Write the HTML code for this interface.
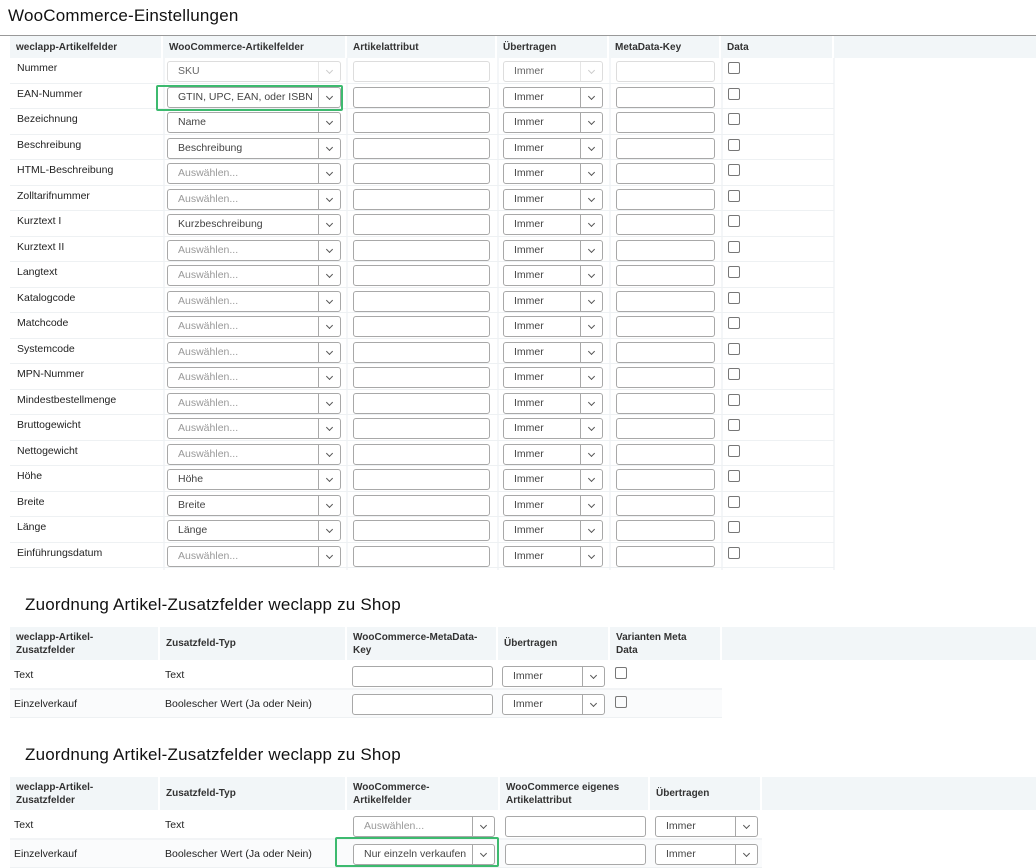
<!DOCTYPE html>
<html><head><meta charset="utf-8"><style>
*{box-sizing:border-box;margin:0;padding:0}
body{width:1036px;height:865px;overflow:hidden;background:#fff;font-family:"Liberation Sans",sans-serif;font-size:10.5px;color:#222;position:relative}
.a{position:absolute}
h1{position:absolute;font-weight:normal;font-size:17px;color:#111;letter-spacing:.2px}
.hd{position:absolute;background:#f2f6f8;font-weight:bold;font-size:10px;color:#333}
.hd div{position:absolute;top:0;bottom:0;border-right:2px solid #fff;padding:0 6px;display:flex;align-items:center;line-height:13px}
.r{position:absolute;left:10px;height:25.5px;border-bottom:1px solid #eef1f3}
.r .l{position:absolute;left:7px;top:4px}
.s{position:absolute;height:21px;border:1px solid #a8a8a8;border-radius:3px;background:#fff;color:#444;padding-left:10px;line-height:19px}
.s.p{color:#999}
.s.d{border-color:#ddd;color:#666}
.s:after{content:"";position:absolute;right:0;top:0;bottom:0;width:21px;border-left:1px solid #a8a8a8}
.s.d:after{border-color:#e6e6e6}
.s i{position:absolute;right:8px;top:6px;width:5px;height:5px;border-right:1px solid #555;border-bottom:1px solid #555;transform:rotate(45deg)}
.s.d i{border-color:#ccc}
.in{position:absolute;height:21px;border:1px solid #a8a8a8;border-radius:3px;background:#fff}
.in.d{border-color:#ddd}
.cb{position:absolute;width:12px;height:12px;border:1px solid #777;border-radius:2px}
.g{position:absolute;border:2px solid #3dba6f;border-radius:2px}
.vl{position:absolute;width:2px;background:#f4f6f8}
</style></head><body>
<h1 style="left:8px;top:6px">WooCommerce-Einstellungen</h1>
<div class="a" style="left:0;top:35px;width:1036px;height:1px;background:#999"></div>
<div class="hd" style="left:10px;top:36px;width:1026px;height:22px">
<div style="left:0;width:153px">weclapp-Artikelfelder</div>
<div style="left:153px;width:184px">WooCommerce-Artikelfelder</div>
<div style="left:337px;width:150px;align-items:flex-end;padding-bottom:4px">Artikelattribut</div>
<div style="left:487px;width:112px">Übertragen</div>
<div style="left:599px;width:112px;align-items:flex-end;padding-bottom:4px">MetaData-Key</div>
<div style="left:711px;width:113px;align-items:flex-end;padding-bottom:4px">Data</div>
</div>
<div class="vl" style="left:163px;top:58px;height:512px"></div>
<div class="vl" style="left:346px;top:58px;height:512px"></div>
<div class="vl" style="left:497px;top:58px;height:512px"></div>
<div class="vl" style="left:609px;top:58px;height:512px"></div>
<div class="vl" style="left:721px;top:58px;height:512px"></div>
<div class="vl" style="left:833px;top:58px;height:512px"></div>

<div class="r" style="top:58px;width:824px"><span class="l">Nummer</span><div class="s d" style="left:157px;top:3px;width:174px">SKU<i></i></div><div class="in d" style="left:343px;top:3px;width:137px"></div><div class="s d" style="left:493px;top:3px;width:100px">Immer<i></i></div><div class="in d" style="left:606px;top:3px;width:99px"></div><div class="cb" style="left:718px;top:4px"></div></div>
<div class="r" style="top:83.5px;width:824px"><span class="l">EAN-Nummer</span><div class="s" style="left:157px;top:3px;width:174px">GTIN, UPC, EAN, oder ISBN<i></i></div><div class="in" style="left:343px;top:3px;width:137px"></div><div class="s" style="left:493px;top:3px;width:100px">Immer<i></i></div><div class="in" style="left:606px;top:3px;width:99px"></div><div class="cb" style="left:718px;top:4px"></div></div>
<div class="r" style="top:109px;width:824px"><span class="l">Bezeichnung</span><div class="s" style="left:157px;top:3px;width:174px">Name<i></i></div><div class="in" style="left:343px;top:3px;width:137px"></div><div class="s" style="left:493px;top:3px;width:100px">Immer<i></i></div><div class="in" style="left:606px;top:3px;width:99px"></div><div class="cb" style="left:718px;top:4px"></div></div>
<div class="r" style="top:134.5px;width:824px"><span class="l">Beschreibung</span><div class="s" style="left:157px;top:3px;width:174px">Beschreibung<i></i></div><div class="in" style="left:343px;top:3px;width:137px"></div><div class="s" style="left:493px;top:3px;width:100px">Immer<i></i></div><div class="in" style="left:606px;top:3px;width:99px"></div><div class="cb" style="left:718px;top:4px"></div></div>
<div class="r" style="top:160px;width:824px"><span class="l">HTML-Beschreibung</span><div class="s p" style="left:157px;top:3px;width:174px">Auswählen...<i></i></div><div class="in" style="left:343px;top:3px;width:137px"></div><div class="s" style="left:493px;top:3px;width:100px">Immer<i></i></div><div class="in" style="left:606px;top:3px;width:99px"></div><div class="cb" style="left:718px;top:4px"></div></div>
<div class="r" style="top:185.5px;width:824px"><span class="l">Zolltarifnummer</span><div class="s p" style="left:157px;top:3px;width:174px">Auswählen...<i></i></div><div class="in" style="left:343px;top:3px;width:137px"></div><div class="s" style="left:493px;top:3px;width:100px">Immer<i></i></div><div class="in" style="left:606px;top:3px;width:99px"></div><div class="cb" style="left:718px;top:4px"></div></div>
<div class="r" style="top:211px;width:824px"><span class="l">Kurztext I</span><div class="s" style="left:157px;top:3px;width:174px">Kurzbeschreibung<i></i></div><div class="in" style="left:343px;top:3px;width:137px"></div><div class="s" style="left:493px;top:3px;width:100px">Immer<i></i></div><div class="in" style="left:606px;top:3px;width:99px"></div><div class="cb" style="left:718px;top:4px"></div></div>
<div class="r" style="top:236.5px;width:824px"><span class="l">Kurztext II</span><div class="s p" style="left:157px;top:3px;width:174px">Auswählen...<i></i></div><div class="in" style="left:343px;top:3px;width:137px"></div><div class="s" style="left:493px;top:3px;width:100px">Immer<i></i></div><div class="in" style="left:606px;top:3px;width:99px"></div><div class="cb" style="left:718px;top:4px"></div></div>
<div class="r" style="top:262px;width:824px"><span class="l">Langtext</span><div class="s p" style="left:157px;top:3px;width:174px">Auswählen...<i></i></div><div class="in" style="left:343px;top:3px;width:137px"></div><div class="s" style="left:493px;top:3px;width:100px">Immer<i></i></div><div class="in" style="left:606px;top:3px;width:99px"></div><div class="cb" style="left:718px;top:4px"></div></div>
<div class="r" style="top:287.5px;width:824px"><span class="l">Katalogcode</span><div class="s p" style="left:157px;top:3px;width:174px">Auswählen...<i></i></div><div class="in" style="left:343px;top:3px;width:137px"></div><div class="s" style="left:493px;top:3px;width:100px">Immer<i></i></div><div class="in" style="left:606px;top:3px;width:99px"></div><div class="cb" style="left:718px;top:4px"></div></div>
<div class="r" style="top:313px;width:824px"><span class="l">Matchcode</span><div class="s p" style="left:157px;top:3px;width:174px">Auswählen...<i></i></div><div class="in" style="left:343px;top:3px;width:137px"></div><div class="s" style="left:493px;top:3px;width:100px">Immer<i></i></div><div class="in" style="left:606px;top:3px;width:99px"></div><div class="cb" style="left:718px;top:4px"></div></div>
<div class="r" style="top:338.5px;width:824px"><span class="l">Systemcode</span><div class="s p" style="left:157px;top:3px;width:174px">Auswählen...<i></i></div><div class="in" style="left:343px;top:3px;width:137px"></div><div class="s" style="left:493px;top:3px;width:100px">Immer<i></i></div><div class="in" style="left:606px;top:3px;width:99px"></div><div class="cb" style="left:718px;top:4px"></div></div>
<div class="r" style="top:364px;width:824px"><span class="l">MPN-Nummer</span><div class="s p" style="left:157px;top:3px;width:174px">Auswählen...<i></i></div><div class="in" style="left:343px;top:3px;width:137px"></div><div class="s" style="left:493px;top:3px;width:100px">Immer<i></i></div><div class="in" style="left:606px;top:3px;width:99px"></div><div class="cb" style="left:718px;top:4px"></div></div>
<div class="r" style="top:389.5px;width:824px"><span class="l">Mindestbestellmenge</span><div class="s p" style="left:157px;top:3px;width:174px">Auswählen...<i></i></div><div class="in" style="left:343px;top:3px;width:137px"></div><div class="s" style="left:493px;top:3px;width:100px">Immer<i></i></div><div class="in" style="left:606px;top:3px;width:99px"></div><div class="cb" style="left:718px;top:4px"></div></div>
<div class="r" style="top:415px;width:824px"><span class="l">Bruttogewicht</span><div class="s p" style="left:157px;top:3px;width:174px">Auswählen...<i></i></div><div class="in" style="left:343px;top:3px;width:137px"></div><div class="s" style="left:493px;top:3px;width:100px">Immer<i></i></div><div class="in" style="left:606px;top:3px;width:99px"></div><div class="cb" style="left:718px;top:4px"></div></div>
<div class="r" style="top:440.5px;width:824px"><span class="l">Nettogewicht</span><div class="s p" style="left:157px;top:3px;width:174px">Auswählen...<i></i></div><div class="in" style="left:343px;top:3px;width:137px"></div><div class="s" style="left:493px;top:3px;width:100px">Immer<i></i></div><div class="in" style="left:606px;top:3px;width:99px"></div><div class="cb" style="left:718px;top:4px"></div></div>
<div class="r" style="top:466px;width:824px"><span class="l">Höhe</span><div class="s" style="left:157px;top:3px;width:174px">Höhe<i></i></div><div class="in" style="left:343px;top:3px;width:137px"></div><div class="s" style="left:493px;top:3px;width:100px">Immer<i></i></div><div class="in" style="left:606px;top:3px;width:99px"></div><div class="cb" style="left:718px;top:4px"></div></div>
<div class="r" style="top:491.5px;width:824px"><span class="l">Breite</span><div class="s" style="left:157px;top:3px;width:174px">Breite<i></i></div><div class="in" style="left:343px;top:3px;width:137px"></div><div class="s" style="left:493px;top:3px;width:100px">Immer<i></i></div><div class="in" style="left:606px;top:3px;width:99px"></div><div class="cb" style="left:718px;top:4px"></div></div>
<div class="r" style="top:517px;width:824px"><span class="l">Länge</span><div class="s" style="left:157px;top:3px;width:174px">Länge<i></i></div><div class="in" style="left:343px;top:3px;width:137px"></div><div class="s" style="left:493px;top:3px;width:100px">Immer<i></i></div><div class="in" style="left:606px;top:3px;width:99px"></div><div class="cb" style="left:718px;top:4px"></div></div>
<div class="r" style="top:542.5px;width:824px"><span class="l">Einführungsdatum</span><div class="s p" style="left:157px;top:3px;width:174px">Auswählen...<i></i></div><div class="in" style="left:343px;top:3px;width:137px"></div><div class="s" style="left:493px;top:3px;width:100px">Immer<i></i></div><div class="in" style="left:606px;top:3px;width:99px"></div><div class="cb" style="left:718px;top:4px"></div></div>
<div class="g" style="left:156px;top:85px;width:187px;height:26px"></div>

<h1 style="left:25px;top:595px">Zuordnung Artikel-Zusatzfelder weclapp zu Shop</h1>
<div class="hd" style="left:10px;top:627px;width:1026px;height:33px">
<div style="left:0;width:150px">weclapp-Artikel-<br>Zusatzfelder</div>
<div style="left:150px;width:187px">Zusatzfeld-Typ</div>
<div style="left:337px;width:151px">WooCommerce-MetaData-<br>Key</div>
<div style="left:488px;width:112px">Übertragen</div>
<div style="left:600px;width:112px">Varianten Meta<br>Data</div>
</div>
<div class="r" style="top:660px;width:712px;height:30px;border-bottom:2px solid #f2f4f6"><span class="a" style="left:4px;top:9px">Text</span><span class="a" style="left:155px;top:9px">Text</span><div class="in" style="left:342px;top:6px;width:141px;height:21px"></div><div class="s" style="left:492px;top:6px;width:103px">Immer<i></i></div><div class="cb" style="left:605px;top:7px"></div></div>
<div class="r" style="top:690px;width:712px;height:28px;background:#fafbfc"><span class="a" style="left:4px;top:8px">Einzelverkauf</span><span class="a" style="left:155px;top:8px">Boolescher Wert (Ja oder Nein)</span><div class="in" style="left:342px;top:4px;width:141px;height:21px"></div><div class="s" style="left:492px;top:4px;width:103px">Immer<i></i></div><div class="cb" style="left:605px;top:6px"></div></div>

<h1 style="left:25px;top:745px">Zuordnung Artikel-Zusatzfelder weclapp zu Shop</h1>
<div class="hd" style="left:10px;top:777px;width:1026px;height:33px">
<div style="left:0;width:150px">weclapp-Artikel-<br>Zusatzfelder</div>
<div style="left:150px;width:187px">Zusatzfeld-Typ</div>
<div style="left:337px;width:153px">WooCommerce-<br>Artikelfelder</div>
<div style="left:490px;width:150px">WooCommerce eigenes<br>Artikelattribut</div>
<div style="left:640px;width:112px">Übertragen</div>
</div>
<div class="r" style="top:810px;width:752px;height:30px;border-bottom:2px solid #f2f4f6"><span class="a" style="left:4px;top:9px">Text</span><span class="a" style="left:155px;top:9px">Text</span><div class="s p" style="left:343px;top:6px;width:142px">Auswählen...<i></i></div><div class="in" style="left:495px;top:6px;width:141px"></div><div class="s" style="left:645px;top:6px;width:103px">Immer<i></i></div></div>
<div class="r" style="top:840px;width:752px;height:28px;background:#fafbfc"><span class="a" style="left:4px;top:8px">Einzelverkauf</span><span class="a" style="left:155px;top:8px">Boolescher Wert (Ja oder Nein)</span><div class="s" style="left:343px;top:4px;width:142px">Nur einzeln verkaufen<i></i></div><div class="in" style="left:495px;top:4px;width:141px"></div><div class="s" style="left:645px;top:4px;width:103px">Immer<i></i></div></div>
<div class="g" style="left:335px;top:837px;width:164px;height:30px"></div>
</body></html>
